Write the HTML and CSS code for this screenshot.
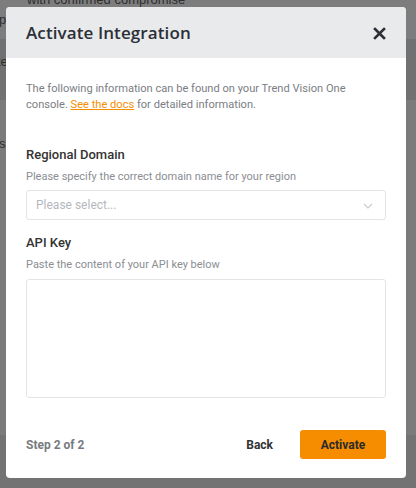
FILE: index.html
```html
<!DOCTYPE html>
<html>
<head>
<meta charset="utf-8">
<link rel="stylesheet" href="styles.css">
</head>
<body>
<div class="backdrop">
  <div class="bg-text t1">with confirmed compromise</div>
  <div class="bg-text t2">p</div>
  <div class="bg-text t3">te</div>
  <div class="bg-text t4">s</div>
</div>
<div class="modal">
  <div class="modal-header">
    <h1 class="title">Activate Integration</h1>
    <svg class="close" width="13" height="13" viewBox="0 0 13 13"><path d="M2 2 L11 11 M11 2 L2 11" stroke="#2b2f36" stroke-width="2.6" stroke-linecap="square"/></svg>
  </div>
  <div class="modal-body">
    <p class="intro">The following information can be found on your Trend Vision One console. <a class="link">See the docs</a> for detailed information.</p>
    <div class="field">
      <div class="label">Regional Domain</div>
      <div class="help">Please specify the correct domain name for your region</div>
      <div class="select">
        <span class="placeholder">Please select...</span>
        <svg class="chev" width="10" height="6" viewBox="0 0 10 6"><path d="M1 1 L5 5 L9 1" fill="none" stroke="#c9ccd1" stroke-width="1.2"/></svg>
      </div>
    </div>
    <div class="field">
      <div class="label">API Key</div>
      <div class="help">Paste the content of your API key below</div>
      <div class="textarea"></div>
    </div>
  </div>
  <div class="modal-footer">
    <span class="step">Step 2 of 2</span>
    <div class="actions">
      <span class="back">Back</span>
      <span class="btn">Activate</span>
    </div>
  </div>
</div>
</body>
</html>
```
FILE: styles.css
```css
html, body {
  margin: 0;
  padding: 0;
}
body {
  width: 416px;
  height: 488px;
  overflow: hidden;
  position: relative;
  background: #7b7b7b;
  font-family: Roboto, "Liberation Sans", sans-serif;
}
.backdrop {
  position: absolute;
  inset: 0;
  background: linear-gradient(#7d7d7d 0, #7d7d7d 39px, #717171 39px, #717171 100px, #7b7b7b 100px, #7b7b7b 435px, #737373 435px);
}
.bg-text {
  position: absolute;
  color: #2e2e2e;
  font-size: 13px;
  font-family: "Liberation Sans", sans-serif;
}
.t1 { left: 27px; top: -8px; }
.t2 { left: -1px; top: 12px; }
.t3 { left: -3px; top: 54px; }
.t4 { left: -1px; top: 136px; }
.modal {
  position: absolute;
  left: 6px;
  top: 7px;
  width: 400px;
  height: 471px;
  background: #fff;
  border-radius: 4px;
  overflow: hidden;
  display: flex;
  flex-direction: column;
}
.modal-header {
  height: 51px;
  background: #e9eaec;
  display: flex;
  align-items: center;
  justify-content: space-between;
  padding: 0 20px 0 20px;
  flex-shrink: 0;
}
.title {
  margin: 0;
  font-family: "Open Sans", sans-serif;
  font-weight: 600;
  font-size: 17px;
  color: #2b2f36;
  letter-spacing: 0.1px;
}
.close { margin-top: 2px; }
.modal-body {
  padding: 23px 20px 0 20px;
  flex: 1;
}
.intro {
  margin: 0;
  font-size: 11.1px;
  line-height: 16px;
  color: #7a7e84;
}
.link {
  color: #f68d00;
  text-decoration: underline;
}
.field { margin-top: 33px; }
.field + .field { margin-top: 14px; }
.label {
  font-size: 13px;
  font-weight: 500;
  color: #333;
  line-height: 18px;
}
.help {
  font-size: 11px;
  color: #8a8e93;
  line-height: 16px;
  margin-top: 5px;
}
.select {
  margin-top: 5px;
  height: 28px;
  border: 1px solid #e3e4e6;
  border-radius: 3px;
  display: flex;
  align-items: center;
  justify-content: space-between;
  padding: 0 12px 0 9px;
}
.placeholder {
  font-size: 12px;
  color: #b4b8be;
}
.chev { margin-top: 1px; }
.textarea {
  margin-top: 6px;
  height: 117px;
  border: 1px solid #e3e4e6;
  border-radius: 3px;
}
.modal-footer {
  display: flex;
  align-items: center;
  justify-content: space-between;
  padding: 0 20px 19px 20px;
}
.step {
  font-size: 12px;
  font-weight: 700;
  color: #777b80;
}
.actions {
  display: flex;
  align-items: center;
  gap: 27px;
}
.back {
  font-size: 12px;
  font-weight: 700;
  color: #333;
}
.btn {
  width: 86px;
  height: 29px;
  background: #f68d00;
  border-radius: 3px;
  display: flex;
  align-items: center;
  justify-content: center;
  font-size: 12px;
  font-weight: 700;
  color: #2b2b2b;
}
```
